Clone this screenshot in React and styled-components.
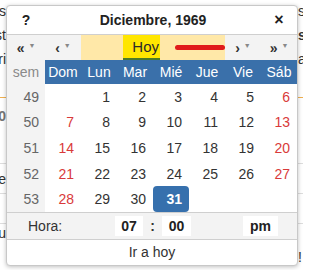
import React from 'react';
import styled, { createGlobalStyle } from 'styled-components';

const GlobalStyle = createGlobalStyle`
  html, body {
    margin: 0;
    padding: 0;
    background: #fff;
  }
  body {
    font-family: "Liberation Sans", Arial, sans-serif;
    font-size: 14px;
    color: #333;
  }
`;

const Page = styled.div`
  position: relative;
  width: 303px;
  height: 270px;
  overflow: hidden;
`;

// page content that sits behind the popup
const Backdrop = styled.div`
  display: flex;
  flex-direction: column;
`;

const BgRow = styled.div`
  display: flex;
  justify-content: space-between;
  align-items: center;
  height: ${p => p.$h}px;
  border-bottom: ${p => (p.$rule ? `1px solid ${p.$rule}` : 'none')};
  box-sizing: border-box;
  white-space: nowrap;
`;

const LeftBit = styled.span`
  width: 6px;
  overflow: hidden;
  display: flex;
  justify-content: flex-end;
  color: ${p => p.$color || '#333'};
  font-weight: ${p => (p.$bold ? 700 : 400)};
`;

const RightBit = styled.span`
  width: 5px;
  overflow: hidden;
  color: ${p => p.$color || '#333'};
  font-weight: ${p => (p.$bold ? 700 : 400)};
`;

const Popup = styled.div`
  position: absolute;
  left: 6px;
  top: 5px;
  width: 290px;
  background: #fff;
  border: 1px solid #c8c8c8;
  border-radius: 4px;
  box-shadow: 0 1px 4px rgba(0, 0, 0, 0.25);
  overflow: hidden;
`;

const Grid = styled.div`
  display: grid;
  grid-template-columns: 38px repeat(7, 36px);
`;

const TitleRow = styled(Grid)`
  height: 28px;
  align-items: center;
  border-bottom: 1px solid #cfcfcf;
  font-weight: 700;
  color: #222;
`;

const TitleBtn = styled.div`
  text-align: center;
  font-size: ${p => p.$size || 14}px;
`;

const TitleText = styled.div`
  grid-column: 2 / span 6;
  text-align: center;
`;

const NavRow = styled(Grid)`
  height: 25px;
  background: #f3f3f3;
`;

const NavBtn = styled.div`
  display: flex;
  align-items: center;
  justify-content: center;
  gap: 4px;
  font-weight: 700;
  color: #333;
  font-size: 14px;
`;

const Caret = styled.span`
  font-size: 7px;
  color: #888;
  margin-top: -5px;
`;

const TodayCell = styled.div`
  grid-column: 3 / span 4;
  background: #ffe8a8;
  display: flex;
  align-items: center;
`;

const TodayBtn = styled.span`
  margin-left: 42px;
  width: 37px;
  height: 25px;
  box-sizing: border-box;
  background: #ffe600;
  border-bottom: 2px solid #4b7a2a;
  display: flex;
  align-items: center;
  justify-content: flex-end;
  padding-right: 1px;
  font-size: 15px;
  color: #2a2a2a;
`;

const RedMark = styled.span`
  margin-left: 15px;
  width: 50px;
  height: 5px;
  border-radius: 3px;
  background: #e01b1b;
`;

const HeadRow = styled(Grid)`
  height: 24px;
  align-items: center;
`;

const WeekHead = styled.div`
  height: 100%;
  background: #f3f3f3;
  color: #8a8a8a;
  display: flex;
  align-items: center;
  justify-content: center;
`;

const DayName = styled.div`
  height: 100%;
  background: #3a70aa;
  color: #fff;
  display: flex;
  align-items: center;
  justify-content: center;
`;

const Body = styled(Grid)`
  grid-auto-rows: 25.6px;
`;

const WeekNum = styled.div`
  background: #f3f3f3;
  color: #666;
  display: flex;
  align-items: center;
  justify-content: flex-end;
  padding-right: 6px;
`;

const Day = styled.div`
  display: flex;
  align-items: center;
  justify-content: flex-end;
  padding-right: 7px;
  color: ${p => (p.$weekend ? '#d93a3a' : '#333')};
  ${p =>
    p.$selected &&
    `
    background: #3670ad;
    color: #fff;
    font-weight: 700;
    border-radius: 4px;
  `}
`;

const TimeRow = styled.div`
  height: 26px;
  background: #f3f3f3;
  border-top: 1px solid #cfcfcf;
  border-bottom: 1px solid #cfcfcf;
  display: flex;
  align-items: center;
`;

const TimeLabel = styled.span`
  margin-left: 21px;
  width: 87px;
  color: #333;
`;

const TimeBox = styled.span`
  background: #fff;
  font-weight: 700;
  color: #222;
  height: 20px;
  width: ${p => p.$w || 28}px;
  display: flex;
  align-items: center;
  justify-content: center;
`;

const Colon = styled.span`
  width: 19px;
  text-align: center;
  font-weight: 700;
`;

const Spacer = styled.span`
  width: ${p => p.$w}px;
`;

const Footer = styled.div`
  height: 25px;
  display: flex;
  align-items: center;
  justify-content: center;
  color: #333;
`;

const bgRows = [
  { h: 22, l: 'Fechas', r: 'se' },
  { h: 25, l: 'Hast', r: 'so', rb: true },
  { h: 23, l: 'Categori', r: 'al' },
  { h: 28, rule: '#f0b050' },
  { h: 36, l: '0', lb: true, lc: '#777' },
  { h: 30, rr: '#ddd' },
  { h: 30, l: 'Clase', rr: '#ddd' },
  { h: 30, rr: '#ddd' },
  { h: 18, l: 'Menu' },
  { h: 30, l: ' ', r: '!' },
];

const weeks = [
  [49, [null, 1, 2, 3, 4, 5, 6]],
  [50, [7, 8, 9, 10, 11, 12, 13]],
  [51, [14, 15, 16, 17, 18, 19, 20]],
  [52, [21, 22, 23, 24, 25, 26, 27]],
  [53, [28, 29, 30, 31, null, null, null]],
];

const dayNames = ['Dom', 'Lun', 'Mar', 'Mié', 'Jue', 'Vie', 'Sáb'];

const App = () => {
  return (
    <Page>
      <GlobalStyle />
      <Backdrop>
        {bgRows.map((row, i) => (
          <BgRow key={i} $h={row.h} $rule={row.rule || row.rr}>
            <LeftBit $bold={row.lb} $color={row.lc}>{row.l}</LeftBit>
            <RightBit $bold={row.rb}>{row.r}</RightBit>
          </BgRow>
        ))}
      </Backdrop>

      <Popup>
        <TitleRow>
          <TitleBtn>?</TitleBtn>
          <TitleText>Diciembre, 1969</TitleText>
          <TitleBtn $size={16}>×</TitleBtn>
        </TitleRow>

        <NavRow>
          <NavBtn>«<Caret>▼</Caret></NavBtn>
          <NavBtn>‹<Caret>▼</Caret></NavBtn>
          <TodayCell>
            <TodayBtn>Hoy</TodayBtn>
            <RedMark />
          </TodayCell>
          <NavBtn>›<Caret>▼</Caret></NavBtn>
          <NavBtn>»<Caret>▼</Caret></NavBtn>
        </NavRow>

        <HeadRow>
          <WeekHead>sem</WeekHead>
          {dayNames.map(d => (
            <DayName key={d}>{d}</DayName>
          ))}
        </HeadRow>

        <Body>
          {weeks.map(([wk, days]) => (
            <React.Fragment key={wk}>
              <WeekNum>{wk}</WeekNum>
              {days.map((d, i) => (
                <Day key={i} $weekend={i === 0 || i === 6} $selected={d === 31}>
                  {d}
                </Day>
              ))}
            </React.Fragment>
          ))}
        </Body>

        <TimeRow>
          <TimeLabel>Hora:</TimeLabel>
          <TimeBox>07</TimeBox>
          <Colon>:</Colon>
          <TimeBox $w={29}>00</TimeBox>
          <Spacer $w={52} />
          <TimeBox $w={35}>pm</TimeBox>
        </TimeRow>

        <Footer>Ir a hoy</Footer>
      </Popup>
    </Page>
  );
};

export default App;
